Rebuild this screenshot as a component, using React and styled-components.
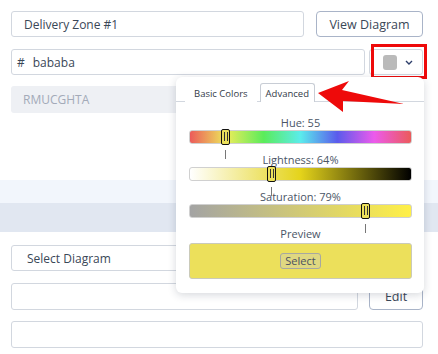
import React, { useState } from 'react'
import styled, { createGlobalStyle } from 'styled-components'

const GlobalStyle = createGlobalStyle`
  html, body { margin: 0; padding: 0; background: #fff; }
  body { font-family: "Open Sans", "Noto Sans", sans-serif; color: #3a4757; }
  * { box-sizing: border-box; }
`

const HUE = 55
const LIGHT = 64
const SAT = 79
const color = `hsl(${HUE}, ${SAT}%, ${LIGHT}%)`

const Page = styled.div`
  position: relative;
  width: 438px;
  height: 354px;
  overflow: hidden;
  padding-top: 11px;
`

const Section = styled.div`
  display: flex;
  flex-direction: column;
  gap: ${p => p.gap || 11}px;
  padding: 0 15px 0 11px;
`

const Row = styled.div`
  display: flex;
  align-items: center;
  gap: ${p => p.gap || 11}px;
`

const Input = styled.div`
  flex: 1 0 auto;
  height: ${p => p.h || 26}px;
  border: 1px solid #d2d7df;
  border-radius: 3px;
  background: #fff;
  display: flex;
  align-items: center;
  padding-left: ${p => p.pad || 12}px;
  font-size: 12px;
  color: #3a4757;
`

const Prefix = styled.span`
  margin-right: 8px;
`

const Readonly = styled.div`
  height: 27px;
  border-radius: 3px;
  background: #eef0f4;
  display: flex;
  align-items: center;
  padding-left: 12px;
  font-size: 12px;
  color: #a3aab8;
`

const Button = styled.div`
  flex: none;
  width: ${p => p.w}px;
  height: ${p => p.h || 26}px;
  border: 1px solid #a9b4c8;
  border-radius: 4px;
  display: flex;
  align-items: center;
  justify-content: center;
  font-size: 12.5px;
  color: #3a4757;
`

const ColorWrap = styled.div`
  position: relative;
  flex: none;
`

const ColorButton = styled.div`
  width: 54px;
  height: 26px;
  border: 1px solid #d2d7df;
  border-radius: 3px;
  display: flex;
  align-items: center;
  padding-left: 13px;
  gap: 8px;
`

const Swatch = styled.div`
  width: 14px;
  height: 15px;
  border-radius: 3px;
  background: #bababa;
`

const RedBox = styled.div`
  position: absolute;
  left: 2px;
  top: -5px;
  width: 56px;
  height: 35px;
  border: 3px solid #ee0a0a;
`

const Band = styled.div`
  height: ${p => p.h}px;
  background: ${p => p.bg};
`

const Spacer = styled.div`
  height: ${p => p.h}px;
`

const Popup = styled.div`
  position: absolute;
  right: -1px;
  top: 28px;
  width: 248px;
  height: 216px;
  background: #fff;
  border-radius: 6px;
  box-shadow: 0 2px 8px rgba(30, 40, 60, 0.18);
  z-index: 5;
`

const Tabs = styled.div`
  display: flex;
  align-items: flex-end;
  gap: 3px;
  height: 25px;
  padding: 0 0 0 9px;
  border-bottom: 1px solid #d2d7df;
`

const Tab = styled.div`
  height: 19px;
  padding: 0 ${p => p.active ? 5 : 8}px;
  font-size: 9.5px;
  line-height: 19px;
  color: #333b47;
  border: 1px solid ${p => p.active ? '#c8cdd5' : 'transparent'};
  border-bottom: none;
  border-radius: 3px 3px 0 0;
  margin-bottom: -1px;
  background: #fff;
`

const Body = styled.div`
  padding: 14px 12px 0 13px;
  display: flex;
  flex-direction: column;
`

const Label = styled.div`
  height: 14px;
  line-height: 14px;
  text-align: center;
  font-size: 11px;
  color: #4a5566;
`

const Track = styled.div`
  position: relative;
  height: 14px;
  border-radius: 3px;
  border: 1px solid #d0d0d0;
  background: ${p => p.bg};
  margin-bottom: 9px;
`

const Thumb = styled.div`
  position: absolute;
  top: -2px;
  width: 9px;
  height: 16px;
  margin-left: -4px;
  border: 1.5px solid #111;
  border-radius: 2px;
  background: ${color};
  &::before {
    content: '';
    position: absolute;
    left: 2px;
    top: 2px;
    width: 2px;
    height: 9px;
    border-left: 1px solid #333;
    border-right: 1px solid #333;
  }
`

const Tick = styled.div`
  position: absolute;
  top: 19px;
  width: 1px;
  height: 9px;
  background: #777;
`

const PreviewBox = styled.div`
  margin-top: 2px;
  height: 36px;
  border-radius: 3px;
  border: 1px solid #cacaba;
  background: ${color};
  display: flex;
  align-items: center;
  justify-content: center;
`

const SelectButton = styled.div`
  font-size: 11px;
  padding: 0 4px;
  height: 16px;
  line-height: 14px;
  border: 1px solid #a7a8a0;
  border-radius: 3px;
  color: #4a5060;
  background: rgba(200, 200, 200, 0.35);
`

const Arrow = styled.svg`
  position: absolute;
  left: 310px;
  top: 76px;
  z-index: 10;
`

const Slider = ({ label, bg, pos }) => (
  <>
    <Label>{label}</Label>
    <Track bg={bg}>
      <Thumb style={{ left: `${pos}%` }} />
      <Tick style={{ left: `${pos}%` }} />
    </Track>
  </>
)

const hueBg = `linear-gradient(to right, ${[0, 60, 120, 180, 240, 300, 360]
  .map(h => `hsl(${h}, ${SAT}%, ${LIGHT}%)`).join(', ')})`
const lightBg = `linear-gradient(to right, hsl(${HUE}, ${SAT}%, 100%), hsl(${HUE}, ${SAT}%, 50%), hsl(${HUE}, ${SAT}%, 0%))`
const satBg = `linear-gradient(to right, hsl(${HUE}, 0%, ${LIGHT}%), hsl(${HUE}, 100%, ${LIGHT}%))`

const ColorPicker = () => {
  const [tab] = useState('advanced')
  return (
    <Popup>
      <Tabs>
        <Tab active={tab === 'basic'}>Basic Colors</Tab>
        <Tab active={tab === 'advanced'}>Advanced</Tab>
      </Tabs>
      <Body>
        <Slider label={`Hue: ${HUE}`} bg={hueBg} pos={(HUE / 360) * 100 + 0.5} />
        <Slider label={`Lightness: ${LIGHT}%`} bg={lightBg} pos={100 - LIGHT + 0.5} />
        <Slider label={`Saturation: ${SAT}%`} bg={satBg} pos={SAT} />
        <Label>Preview</Label>
        <PreviewBox>
          <SelectButton>Select</SelectButton>
        </PreviewBox>
      </Body>
    </Popup>
  )
}

export default function App() {
  return (
    <Page>
      <GlobalStyle />
      <Section gap={12}>
        <Row gap={12}>
          <Input>Delivery Zone #1</Input>
          <Button w={107}>View Diagram</Button>
        </Row>
        <Row gap={4}>
          <Input pad={5}><Prefix>#</Prefix>bababa</Input>
          <ColorWrap>
            <ColorButton>
              <Swatch />
              <svg width="8" height="5" viewBox="0 0 8 5">
                <polyline points="1,1 4,4 7,1" fill="none" stroke="#2d3e6b" strokeWidth="1.4" />
              </svg>
            </ColorButton>
            <RedBox />
            <ColorPicker />
          </ColorWrap>
        </Row>
      </Section>
      <Spacer h={11} />
      <Section>
        <Readonly>RMUCGHTA</Readonly>
      </Section>
      <Spacer h={67} />
      <Band h={23} bg="#f2f6fc" />
      <Band h={29} bg="#e1e7f1" />
      <Spacer h={13} />
      <Section>
        <Input pad={15}>Select Diagram</Input>
        <Row>
          <Input h={27} />
          <Button w={54} h={28}>Edit</Button>
        </Row>
        <Input h={27} />
      </Section>
      <Arrow width="100" height="40" viewBox="310 76 100 40">
        <polygon points="318,93 349,81 342,90 404,104 343,101 343,112" fill="#ee0a0a" />
      </Arrow>
    </Page>
  )
}
